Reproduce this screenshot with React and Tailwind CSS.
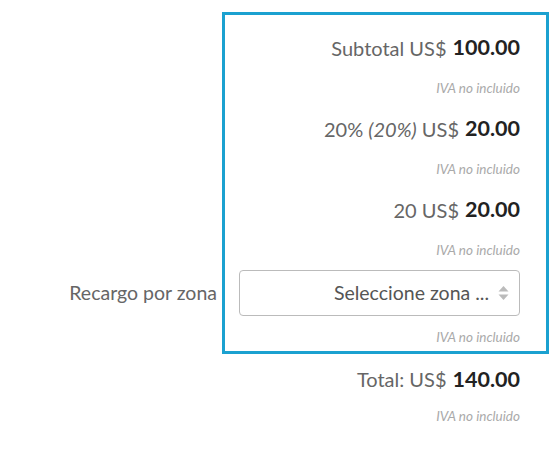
function Amount({ label, value }) {
  return (
    <div className="h-[41px] flex items-center justify-end text-[20px] text-[#666]">
      <span>{label}</span>
      <span className="ml-[6px] text-[21.5px] font-bold text-[#222]">{value}</span>
    </div>
  );
}

function Iva({ className = "h-[40px]" }) {
  return (
    <div className={`flex items-center justify-end text-[13.5px] italic text-[#aaa] ${className}`}>
      IVA no incluido
    </div>
  );
}

export default function App() {
  return (
    <div className="w-[560px] h-[454px] bg-white pt-[12px] font-['Lato','Liberation_Sans',sans-serif]">
      <div className="ml-[222px] w-[327px] border-[3px] border-[#1ba1d0] pl-[14px] pr-[26px] pt-[12px] pb-[6px]">
        <Amount label="Subtotal US$" value="100.00" />
        <Iva />
        <Amount
          label={
            <>
              20% <span className="italic">(20%)</span> US$
            </>
          }
          value="20.00"
        />
        <Iva />
        <Amount label="20 US$" value="20.00" />
        <Iva />
        <div className="flex items-center -ml-[190px]">
          <label className="flex-1 text-right pr-[22px] text-[19.5px] text-[#666]">Recargo por zona</label>
          <div className="w-[281px] h-[46px] border border-[#bbb] rounded-[4px] flex items-center justify-end pr-[10px] text-[19.5px] text-[#555]">
            <span>Seleccione zona ...</span>
            <svg width="11" height="16" viewBox="0 0 11 16" className="ml-[9px]">
              <path d="M5.5 1 L10.5 6.5 L0.5 6.5 Z" fill="#bbb" />
              <path d="M5.5 15 L10.5 9.5 L0.5 9.5 Z" fill="#bbb" />
            </svg>
          </div>
        </div>
        <Iva className="pt-[13px] leading-[16px]" />
      </div>
      <div className="pr-[40px]">
        <div className="h-[50px] flex items-center justify-end text-[20px] text-[#666]">
          <span>Total: US$</span>
          <span className="ml-[6px] text-[21.5px] font-bold text-[#222]">140.00</span>
        </div>
        <Iva className="h-[24px]" />
      </div>
    </div>
  );
}
